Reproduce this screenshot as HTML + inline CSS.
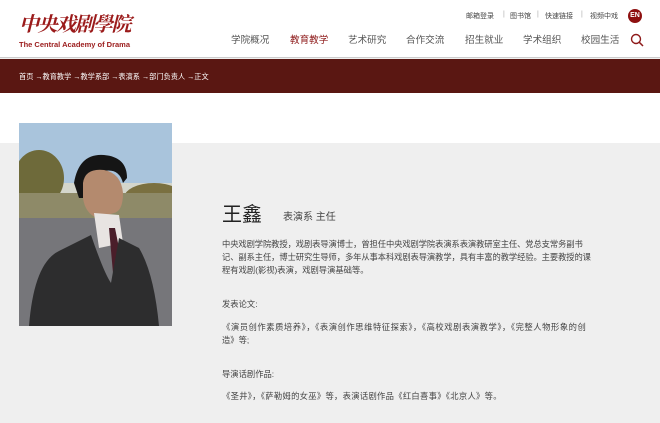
<!DOCTYPE html>
<html><head><meta charset="utf-8"><style>
*{margin:0;padding:0;box-sizing:border-box}
body{width:660px;height:423px;overflow:hidden;background:#efefef;font-family:"Liberation Sans","Noto Sans CJK SC",sans-serif;position:relative;color:#333}
.hdr{position:absolute;left:0;top:0;width:660px;height:58px;background:#fff;border-bottom:1px solid #ccc}
.logo{position:absolute;left:19px;top:8px;font-family:"Noto Serif CJK SC",serif;font-size:20px;color:#9b1b1b;font-style:italic;letter-spacing:-1.5px;font-weight:700}
.logoen{position:absolute;left:19px;top:40px;font-size:7.5px;font-weight:700;color:#9b1b1b;white-space:nowrap}
.top{position:absolute;top:11px;font-size:7px;color:#444;white-space:nowrap}
.en{position:absolute;left:628px;top:9px;width:14px;height:14px;border-radius:50%;background:#8e1010;color:#fff;font-size:7px;font-weight:700;text-align:center;line-height:14px}
.nav{position:absolute;top:32px;font-size:9.6px;color:#555;white-space:nowrap}
.bar{position:absolute;left:0;top:59px;width:660px;height:34px;background:#5a1712}
.crumb{position:absolute;left:19px;top:72px;font-size:7.2px;color:#fff;white-space:nowrap}
.white{position:absolute;left:0;top:93px;width:660px;height:50px;background:#fff}
.photo{position:absolute;left:19px;top:123px;width:153px;height:203px;overflow:hidden}
.t{position:absolute;left:222px;font-size:8.3px;color:#444;white-space:nowrap}
</style></head><body>
<div class="hdr"></div>
<div class="logo">中央戏剧學院</div>
<div class="logoen">The Central Academy of Drama</div>
<div class="top" style="left:466px">邮箱登录</div>
<div class="top" style="left:503px;color:#aaa">|</div>
<div class="top" style="left:510px">图书馆</div>
<div class="top" style="left:537px;color:#aaa">|</div>
<div class="top" style="left:545px">快速链接</div>
<div class="top" style="left:581px;color:#aaa">|</div>
<div class="top" style="left:590px">视频中戏</div>
<div class="en">EN</div>
<div class="nav" style="left:231px">学院概况</div>
<div class="nav" style="left:290px;color:#8e1a1a">教育教学</div>
<div class="nav" style="left:348px">艺术研究</div>
<div class="nav" style="left:406px">合作交流</div>
<div class="nav" style="left:465px">招生就业</div>
<div class="nav" style="left:523px">学术组织</div>
<div class="nav" style="left:581px">校园生活</div>
<svg style="position:absolute;left:630px;top:33px" width="14" height="14" viewBox="0 0 14 14"><circle cx="6" cy="6" r="4.5" fill="none" stroke="#8e1a1a" stroke-width="1.4"/><path d="M9.3 9.3L13 13" stroke="#8e1a1a" stroke-width="1.5"/></svg>
<div class="bar"></div>
<div class="crumb">首页 →教育教学 →教学系部 →表演系 →部门负责人 →正文</div>
<div class="white"></div>
<div class="photo">
<svg width="153" height="203" viewBox="0 0 153 203">
<rect x="0" y="0" width="153" height="70" fill="#a9c4dc"/>
<rect x="0" y="60" width="153" height="20" fill="#d4d6cc"/>
<ellipse cx="20" cy="55" rx="25" ry="28" fill="#6e6a3a"/>
<ellipse cx="135" cy="75" rx="30" ry="15" fill="#7a7040"/>
<rect x="0" y="70" width="153" height="30" fill="#8e8a68"/>
<rect x="0" y="95" width="153" height="108" fill="#76767a"/>
<path d="M55 60 Q60 30 85 32 Q108 34 108 55 L104 60 Q100 45 85 48 Q70 55 68 75 L60 75 Z" fill="#151515"/>
<path d="M64 60 Q66 45 85 47 Q102 50 104 70 Q104 88 95 90 L78 95 Q66 90 64 75 Z" fill="#b48a6e"/>
<path d="M75 90 L100 92 L104 120 L80 125 Z" fill="#e8e4e2"/>
<path d="M90 105 L96 105 L104 145 L94 150 Z" fill="#4a1e2a"/>
<path d="M10 203 Q15 140 40 128 L72 112 Q85 150 92 160 L100 115 L120 125 Q135 150 140 203 Z" fill="#2d2d2e"/>
</svg>
</div>
<div style="position:absolute;left:222px;top:198px;font-size:20px;color:#222">王鑫</div>
<div style="position:absolute;left:283px;top:208px;font-size:10px;color:#444">表演系 主任</div>
<div class="t" style="top:238px;letter-spacing:-0.1px">中央戏剧学院教授，戏剧表导演博士，曾担任中央戏剧学院表演系表演教研室主任、党总支常务副书</div>
<div class="t" style="top:251px;letter-spacing:-0.1px">记、副系主任，博士研究生导师，多年从事本科戏剧表导演教学，具有丰富的教学经验。主要教授的课</div>
<div class="t" style="top:264px">程有戏剧(影视)表演，戏剧导演基础等。</div>
<div class="t" style="top:298px">发表论文:</div>
<div class="t" style="top:321px;letter-spacing:0.55px">《演员创作素质培养》，《表演创作思维特征探索》，《高校戏剧表演教学》，《完整人物形象的创</div>
<div class="t" style="top:334px">造》等;</div>
<div class="t" style="top:368px">导演话剧作品:</div>
<div class="t" style="top:390px;letter-spacing:0.3px">《圣井》，《萨勒姆的女巫》等，表演话剧作品《红白喜事》《北京人》等。</div>
</body></html>
